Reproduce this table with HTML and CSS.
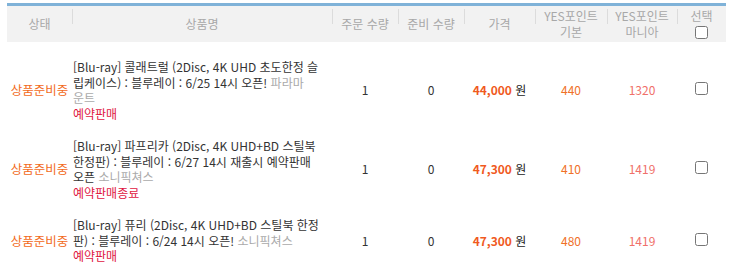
FILE: index.html
```html
<!DOCTYPE html>
<html lang="ko">
<head>
<meta charset="utf-8">
<link rel="stylesheet" href="styles.css">
</head>
<body>
<table class="order">
  <colgroup>
    <col class="c-status"><col class="c-name"><col class="c-qty"><col class="c-qty"><col class="c-price"><col class="c-pt"><col class="c-pt2"><col class="c-sel">
  </colgroup>
  <thead>
    <tr>
      <th class="first">상태</th>
      <th>상품명</th>
      <th>주문 수량</th>
      <th>준비 수량</th>
      <th>가격</th>
      <th>YES포인트<br>기본</th>
      <th>YES포인트<br>마니아</th>
      <th>선택<br><input type="checkbox" class="chk"></th>
    </tr>
  </thead>
  <tbody>
    <tr class="row-first">
      <td class="status">상품준비중</td>
      <td class="name">[Blu-ray] 콜래트럴 (2Disc, 4K UHD 초도한정 슬<br>립케이스) : 블루레이 : 6/25 14시 오픈! <span class="pub">파라마<br>운트</span><br><span class="tag">예약판매</span></td>
      <td class="num">1</td>
      <td class="num">0</td>
      <td class="price"><b>44,000</b> 원</td>
      <td class="pt">440</td>
      <td class="pt2">1320</td>
      <td class="sel"><input type="checkbox" class="chk"></td>
    </tr>
    <tr>
      <td class="status">상품준비중</td>
      <td class="name">[Blu-ray] 파프리카 (2Disc, 4K UHD+BD 스틸북<br>한정판) : 블루레이 : 6/27 14시 재출시 예약판매<br>오픈 <span class="pub">소니픽쳐스</span><br><span class="tag">예약판매종료</span></td>
      <td class="num">1</td>
      <td class="num">0</td>
      <td class="price"><b>47,300</b> 원</td>
      <td class="pt">410</td>
      <td class="pt2">1419</td>
      <td class="sel"><input type="checkbox" class="chk"></td>
    </tr>
    <tr>
      <td class="status">상품준비중</td>
      <td class="name">[Blu-ray] 퓨리 (2Disc, 4K UHD+BD 스틸북 한정<br>판) : 블루레이 : 6/24 14시 오픈! <span class="pub">소니픽쳐스</span><br><span class="tag">예약판매</span></td>
      <td class="num">1</td>
      <td class="num">0</td>
      <td class="price"><b>47,300</b> 원</td>
      <td class="pt">480</td>
      <td class="pt2">1419</td>
      <td class="sel"><input type="checkbox" class="chk"></td>
    </tr>
  </tbody>
</table>
</body>
</html>
```
FILE: styles.css
```css
html, body {
  margin: 0;
  padding: 0;
  background: #fff;
}
body {
  padding: 3px 5px 0 7px;
  font-family: "Noto Sans CJK KR", "Noto Sans", sans-serif;
  font-size: 12px;
  color: #333;
}
.order {
  width: 719px;
  table-layout: fixed;
  border-collapse: collapse;
  border-top: 3px solid #7fb2d8;
}
.c-status { width: 65px; }
.c-name { width: 260px; }
.c-qty { width: 66px; }
.c-price { width: 71px; }
.c-pt { width: 72px; }
.c-pt2 { width: 70px; }
.c-sel { width: 49px; }

thead th {
  height: 36px;
  padding: 0;
  font-weight: normal;
  color: #a8a8a8;
  line-height: 16px;
  text-align: center;
  vertical-align: middle;
  background: linear-gradient(#dcdcdc, #dcdcdc) left 3px / 1px 15px no-repeat, #f2f2f2;
}
thead th.first {
  background: #f2f2f2;
}
thead .chk {
  margin: 0;
  vertical-align: top;
  margin-top: 2px;
}
tbody td {
  padding: 8px 0 9px;
  line-height: 15.5px;
  text-align: center;
  vertical-align: middle;
}
tbody .row-first td {
  padding-top: 17px;
}
.status {
  font-size: 12.5px;
  color: #f26a21;
  white-space: nowrap;
}
td.name {
  text-align: left;
  white-space: nowrap;
  padding-left: 1px;
  padding-right: 5px;
  color: #333;
}
.pub { color: #aaa; }
.tag { color: #e0163f; }
.num { color: #333; }
.price { color: #222; }
.price b { color: #f05a1e; }
.pt { color: #f07028; }
.pt2 { color: #f0706a; }
.sel .chk { margin: 0; }
```
